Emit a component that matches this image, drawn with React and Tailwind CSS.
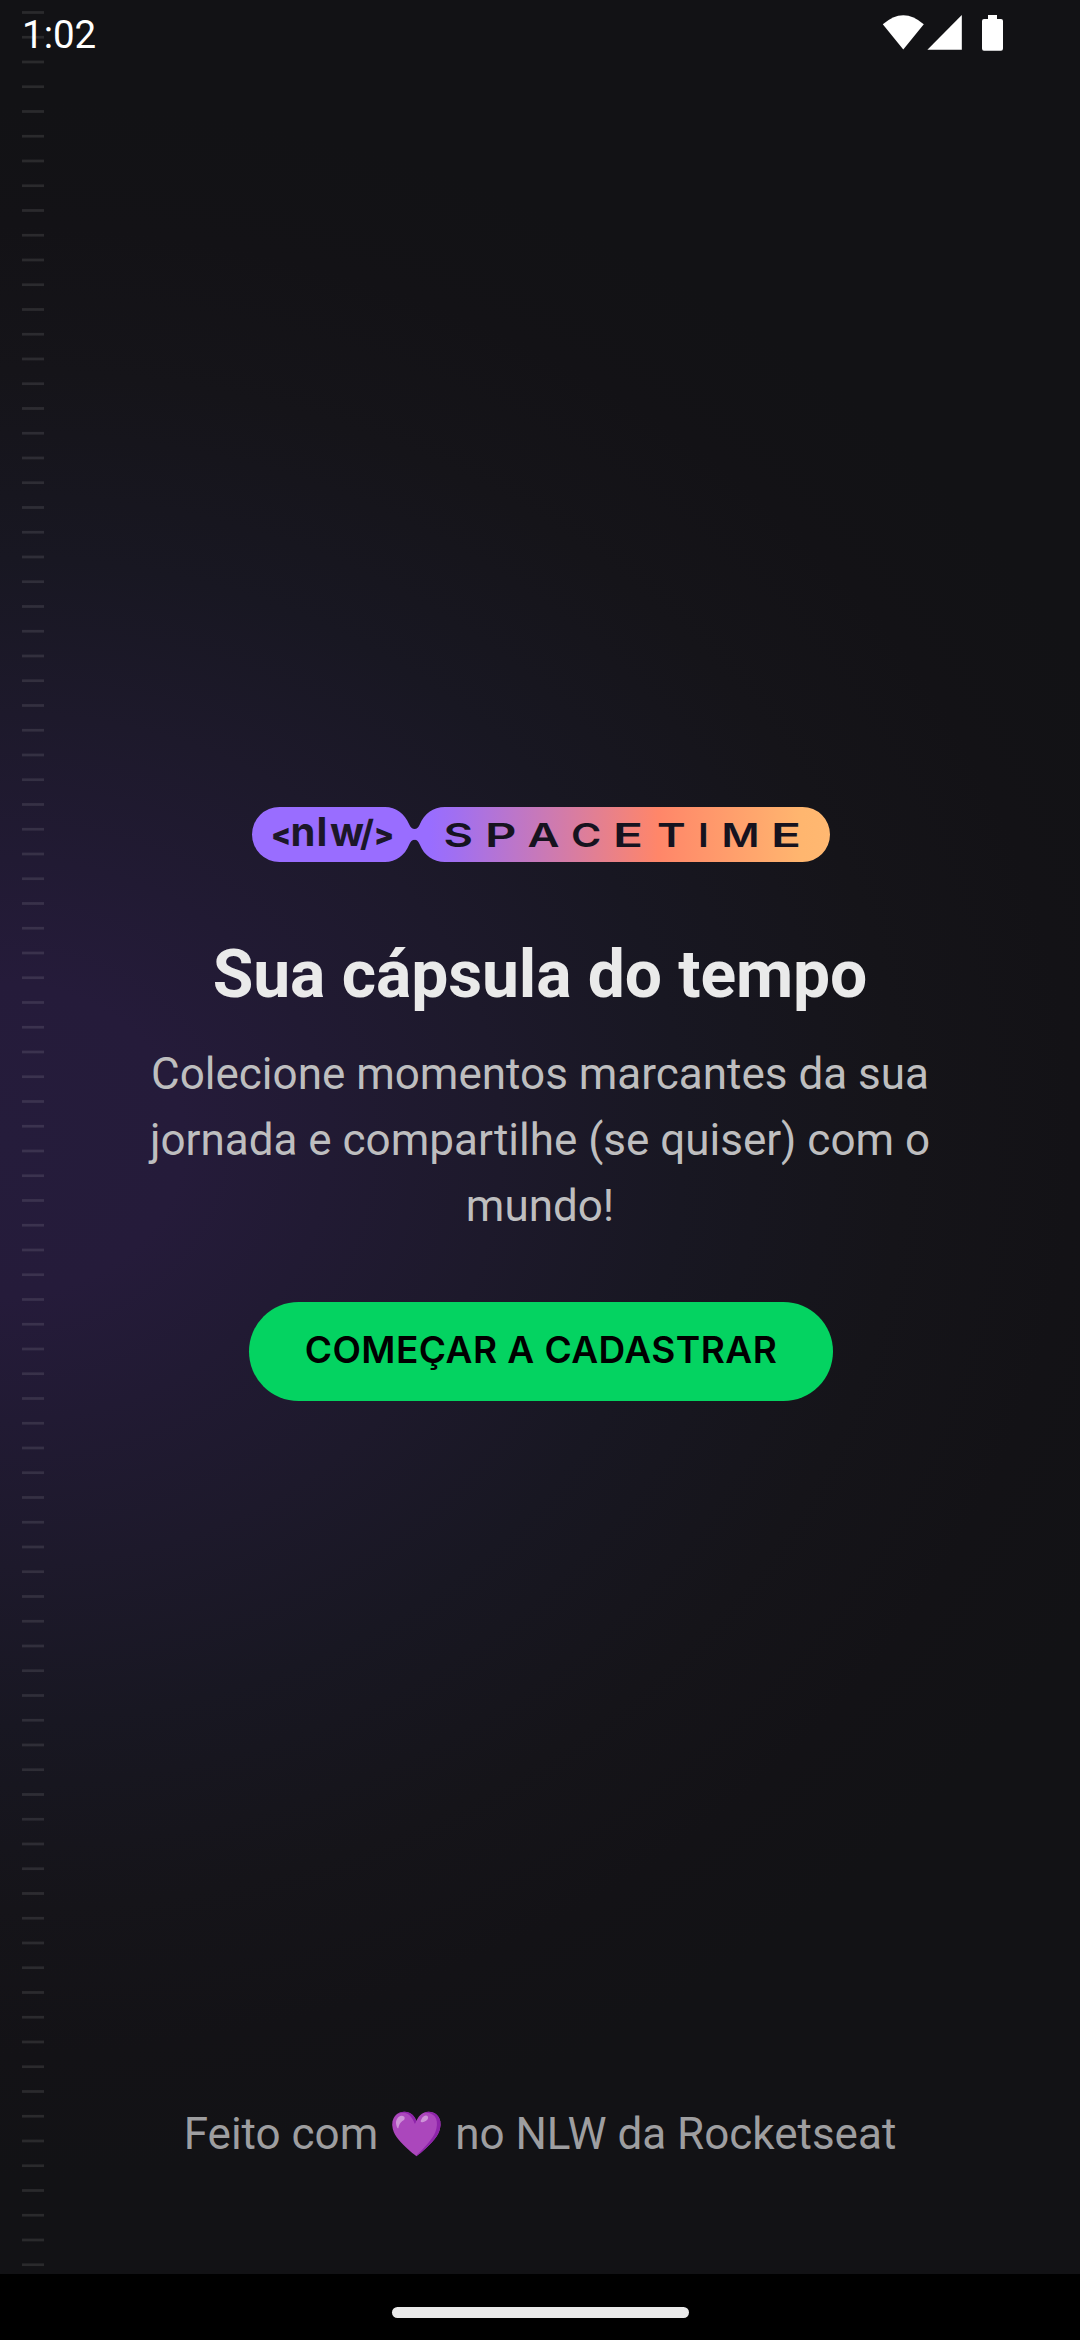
import React from "react";

const STRIPES = Array.from({ length: 92 }, (_, i) => i);

const SPACETIME = [
  ["S", 191.5, 29.5],
  ["P", 233, 31.5],
  ["A", 275.5, 32],
  ["C", 319, 30.3],
  ["E", 361, 30],
  ["T", 405, 28.7],
  ["I", 446, 10.8],
  ["M", 469.5, 38],
  ["E", 519, 30],
];

function Stripes() {
  return (
    <svg className="absolute left-[22px] top-0 h-[2274px] w-[22px]" viewBox="0 0 22 2274">
      {STRIPES.map((i) => (
        <rect key={i} x="0" y={11.1 + i * 24.75} width="22" height="2.75" fill="#ffffff" fillOpacity="0.1" />
      ))}
    </svg>
  );
}

function StatusBar() {
  return (
    <header className="relative flex h-[66px] items-start justify-between pl-[22px] pr-[77px]">
      <span className="pt-[11px] text-[38.5px] leading-[48px] text-white">1:02</span>
      <svg className="mt-[14px] h-[38px] w-[121px]" viewBox="0 0 121 38" fill="#fff">
        <path d="M0.8 10.3 Q21.3 -8 41.8 10.3 L21.3 35.5 Z" />
        <path d="M79.8 1 V35.7 H45.4 Z" />
        <path d="M106 1 H115 V5 H119 Q121 5 121 7 V34.5 Q121 36.7 119 36.7 H102 Q100 36.7 100 34.5 V7 Q100 5 102 5 H106 Z" />
      </svg>
    </header>
  );
}

function Logo() {
  return (
    <svg className="h-[55px] w-[578px]" viewBox="0 0 578 55">
      <defs>
        <linearGradient id="spacetime" gradientUnits="userSpaceOnUse" x1="178" y1="0" x2="578" y2="0">
          <stop offset="0" stopColor="#996DFF" />
          <stop offset="0.06" stopColor="#a06ff2" />
          <stop offset="0.57" stopColor="#FF8669" />
          <stop offset="0.93" stopColor="#FFB66F" />
          <stop offset="1" stopColor="#FFB871" />
        </linearGradient>
      </defs>
      <path
        fill="#996DFF"
        d="M27.5 0 H133 C144 0 153 7 157 17 C158.5 20.5 160 22 163 22 V32.7 C160 32.7 158.5 34.5 157 38 C153 48 144 55 133 55 H27.5 A27.5 27.5 0 0 1 27.5 0 Z"
      />
      <path
        fill="url(#spacetime)"
        d="M550.5 0 H193 C181 0 172 7 168 17 C166.5 20.5 165 22 162.5 22 V32.7 C165 32.7 166.5 34.5 168 38 C172 48 181 55 193 55 H550.5 A27.5 27.5 0 0 0 550.5 0 Z"
      />
      <text className="font-['Inter'] text-[40px] font-bold" fill="#1c1729">
        <tspan className="text-[29px] font-black" x="19" y="38">{"<"}</tspan>
        <tspan x="38.5 64.5 78" y="39">nlw</tspan>
        <tspan className="text-[36px]" x="108" y="39">/</tspan>
        <tspan className="text-[29px] font-black" x="122" y="38">{">"}</tspan>
      </text>
      <text className="font-['Inter'] text-[33px] font-semibold" fill="#16131f">
        {SPACETIME.map(([letter, x, width]) => (
          <tspan key={x} x={x} y="40" textLength={width} lengthAdjust="spacingAndGlyphs">
            {letter}
          </tspan>
        ))}
      </text>
    </svg>
  );
}

export default function App() {
  return (
    <div className="relative flex h-[2340px] w-[1080px] flex-col overflow-hidden bg-[#121215] font-['Roboto',sans-serif]">
      <div className="absolute inset-x-0 top-0 h-[2274px] bg-[radial-gradient(1220px_1040px_at_0px_1140px,#251c3b_0%,#251b3a_15%,#211a33_27%,#1d192b_41%,#181722_56%,#151419_74%,#131216_88%,#121215_100%)]" />
      <Stripes />
      <StatusBar />
      <main className="relative flex grow flex-col items-center">
        <div className="mt-[741px] ml-[2px] flex">
          <Logo />
        </div>
        <h1 className="mt-[60px] text-[66px] font-bold leading-[106px] tracking-[-0.1px] text-[#eaeaea]">Sua cápsula do tempo</h1>
        <p className="mt-[13px] w-[820px] text-center text-[44px] leading-[66px] text-[#bebebf]">
          Colecione momentos marcantes da sua jornada e compartilhe (se quiser) com o mundo!
        </p>
        <button className="mt-[63px] ml-[2px] flex h-[99px] w-[584px] items-center justify-center rounded-full bg-[#04d361] pb-[5px] font-['Inter'] text-[37px] font-semibold leading-none tracking-[0.45px] text-black">
          COMEÇAR A CADASTRAR
        </button>
      </main>
      <footer className="relative mb-[107px] text-center text-[44px] leading-[66px] text-[#9e9ea0]">
        Feito com 💜 no NLW da Rocketseat
      </footer>
      <nav className="relative flex h-[66px] shrink-0 items-start justify-center bg-black pt-[33px]">
        <div className="h-[11px] w-[297px] rounded-full bg-[#eaeaea]" />
      </nav>
    </div>
  );
}
